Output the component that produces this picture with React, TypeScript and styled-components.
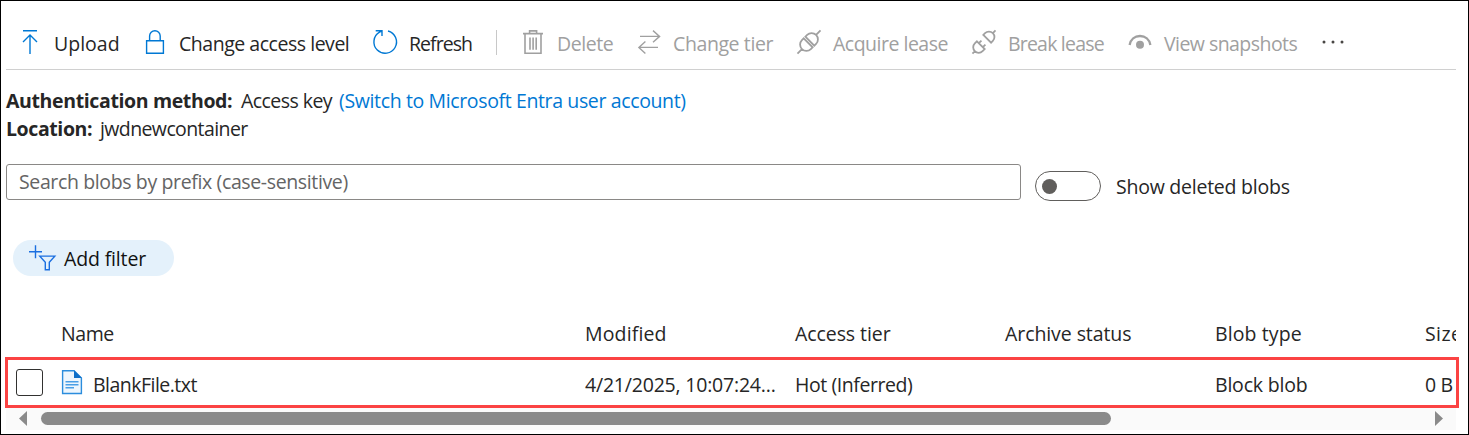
import React from "react";
import styled, { createGlobalStyle } from "styled-components";

const GlobalStyle = createGlobalStyle`
  * { box-sizing: border-box; }
  body { margin: 0; background: #fff; }
`;

const Frame = styled.main`
  width: 1469px;
  height: 435px;
  border: 1px solid #000;
  padding: 0 12px 0 5px;
  background: #fff;
  color: #262626;
  font: 400 19.5px/28px "Open Sans", "Noto Sans", sans-serif;
  font-kerning: none;
  white-space: nowrap;
  display: flex;
  flex-direction: column;
`;

const Text = styled.span<{ $track?: number }>`
  letter-spacing: ${(p) => p.$track ?? -0.35}px;
`;

const Toolbar = styled.nav`
  height: 69px;
  flex: none;
  border-bottom: 1px solid #d0d0d0;
  padding: 29px 0 0 12px;
  display: flex;
  align-items: flex-start;
`;

const Command = styled.button<{ $width: number; $disabled?: boolean }>`
  width: ${(p) => p.$width}px;
  flex: none;
  border: 0;
  padding: 0;
  background: none;
  font: inherit;
  display: flex;
  gap: 12px;
  color: ${(p) => (p.$disabled ? "#a0a0a0" : "#262626")};
`;

const Glyph = styled.svg<{ $color?: string }>`
  width: 24px;
  height: 24px;
  flex: none;
  overflow: visible;
  fill: none;
  stroke: ${(p) => p.$color ?? "#0078d4"};
  stroke-width: 1.4;
`;

const Divider = styled.span`
  width: 1px;
  height: 25px;
  margin: 0 24px 0 0;
  background: #c8c8c8;
`;

const Info = styled.section`
  padding-top: 17px;
  height: 94px;
  flex: none;
`;

const InfoLine = styled.p`
  margin: 0;
  display: flex;
`;

const Key = styled.b<{ $width: number; $track: number }>`
  width: ${(p) => p.$width}px;
  letter-spacing: ${(p) => p.$track}px;
`;

const Link = styled.a`
  margin-left: 2.5px;
  color: #0078d4;
  letter-spacing: -0.37px;
`;

const SearchRow = styled.section`
  height: 76px;
  flex: none;
  display: flex;
  align-items: flex-start;
`;

const SearchBox = styled.div`
  width: 1015px;
  height: 36px;
  border: 1px solid #8a8886;
  border-radius: 3px;
  padding: 3px 0 0 12px;
  color: #646464;
`;

const Switch = styled.span`
  width: 66px;
  height: 30px;
  margin: 7px 15px 0 14px;
  border: 1px solid #605e5c;
  border-radius: 15px;
  padding: 7px 6px;
`;

const Knob = styled.span`
  display: block;
  width: 15px;
  height: 15px;
  border-radius: 50%;
  background: #605e5c;
`;

const SwitchLabel = styled.label`
  padding-top: 9px;
`;

const FilterPill = styled.button`
  width: 161px;
  height: 36px;
  flex: none;
  margin-left: 7px;
  border: 0;
  border-radius: 18px;
  padding: 2px 0 0 16px;
  background: #e4f1fb;
  color: #111;
  font: inherit;
  display: flex;
  align-items: center;
  gap: 7px;
`;

const FilterGlyph = styled(Glyph)`
  width: 28px;
  height: 28px;
`;

const Grid = styled.section`
  padding-top: 44px;
  display: flex;
  flex-direction: column;
`;

const Row = styled.div<{ $head?: boolean }>`
  height: ${(p) => (p.$head ? 37 : 51)}px;
  padding-top: ${(p) => (p.$head ? 0 : 12)}px;
  font-weight: ${(p) => (p.$head ? 500 : 400)};
  position: relative;
`;

const Cells = styled.div<{ $inset?: number }>`
  display: grid;
  grid-template-columns: 55px 524px 210px 210px 210px 210px 31px;
  overflow: hidden;

  > span {
    padding-top: ${(p) => p.$inset ?? 0}px;
  }
`;

const NameCell = styled.div`
  display: flex;
  gap: 8px;
  padding-top: 2px;

  svg {
    margin-top: -1px;
  }
`;

const Checkbox = styled.div`
  width: 27px;
  height: 27px;
  margin-left: 10px;
  border: 1px solid #323130;
  border-radius: 3px;
`;

const Highlight = styled.div`
  position: absolute;
  inset: 0 -3px 0 -1px;
  border: 3px solid #fb4343;
`;

const Scrollbar = styled.div`
  height: 22px;
  background: #fafafa;
  display: flex;
  align-items: center;
  padding: 0 13px 1px;
`;

const Thumb = styled.div`
  width: 1070px;
  height: 13px;
  margin: 0 auto 0 14px;
  border-radius: 7px;
  background: #8a8a8a;
`;

const Arrow = styled.svg`
  width: 8px;
  height: 15px;
  fill: #8a8a8a;
`;

const GREY = "#a0a0a0";

const UploadIcon = () => (
  <Glyph viewBox="0 0 24 24">
    <path d="M5 .8H19M12 5V24M5 12l7-7 7 7" />
  </Glyph>
);
const LockIcon = () => (
  <Glyph viewBox="0 0 24 24">
    <path d="M3.6 10.7H20.4V23.3H3.6ZM6.6 10.7V6a5.3 5.3 0 0 1 10.6 0v4.7" />
  </Glyph>
);
const RefreshIcon = () => (
  <Glyph viewBox="0 0 24 24">
    <path d="M15 1A11.3 11.3 0 1 1 6.5 2.2L9 .8M2.7.8H9V6" />
  </Glyph>
);
const DeleteIcon = () => (
  <Glyph viewBox="0 0 24 24" $color={GREY}>
    <path d="M2 3.6H22M8.6 3.4V.9h7v2.5M4 3.6V23.3H20V3.6M9 7.5v12.3M12.1 7.5v12.3M15.2 7.5v12.3" strokeWidth="1.6" />
  </Glyph>
);
const TierIcon = () => (
  <Glyph viewBox="0 0 24 24" $color={GREY}>
    <path d="M3 6.4H22.6M16 .6l6.6 5.8-6.6 5.8M21 17.4H2M8.4 11.6L1.9 17.4l6.5 6" />
  </Glyph>
);
const AcquireIcon = () => (
  <Glyph viewBox="0 0 24 24" $color={GREY}>
    <g transform="translate(12 12) rotate(-45)">
      <path
        strokeWidth="1.8"
        d="M-16.3 0H-10M-1.2-6.3V6.3H-3.7A6.3 6.3 0 0 1-3.7-6.3ZM1.2-6.3V6.3H3.7A6.3 6.3 0 0 0 3.7-6.3ZM10 0H16.3"
      />
    </g>
  </Glyph>
);
const BreakIcon = () => (
  <Glyph viewBox="0 0 24 24" $color={GREY}>
    <g transform="translate(12 12) rotate(-45)">
      <path
        strokeWidth="1.8"
        d="M-16.3 0H-13M-4.500-5.5V5.5H-7.5A5.5 5.5 0 0 1-7.5-5.5ZM-4.500-2.8H-.8M-4.500 2.8H-.8M4.5-5.5V5.5H7A5.5 5.5 0 0 0 7-5.5ZM12.5 0H16.3"
      />
    </g>
  </Glyph>
);
const EyeIcon = () => (
  <Glyph viewBox="0 0 24 24" $color={GREY}>
    <path d="M1.6 15C2.6 9.2 6.8 6 12 6s9.4 3.2 10.4 9" strokeWidth="2.3" />
    <circle cx="12" cy="14.7" r="4" fill={GREY} stroke="none" />
  </Glyph>
);
const MoreIcon = () => (
  <Glyph viewBox="0 0 24 24">
    <g fill="#484644" stroke="none">
      <circle cx="4" cy="12" r="1.5" />
      <circle cx="13" cy="12" r="1.5" />
      <circle cx="22" cy="12" r="1.5" />
    </g>
  </Glyph>
);
const AddFilterIcon = () => (
  <FilterGlyph viewBox="0 0 28 28" $color="#1a6fe0">
    <path d="M0 6.7H13M6.5 .2V13.2M10.8 11.1H25.8L20.3 17.3V24.7H16.3V17.3Z" />
  </FilterGlyph>
);
const FileIcon = () => (
  <Glyph viewBox="0 0 24 24">
    <path d="M1.6.7H13L20.4 8V23.5H1.6Z" fill="#eef6fd" stroke="#2b8ddd" />
    <path d="M13 .2L20.9 8H13Z" fill="#0f6fc8" stroke="none" />
    <path d="M4.500 11.700H17.500M4.500 14.700H17.500M4.500 17.700H13" stroke="#4a9fe6" />
  </Glyph>
);

type Cmd = { label: string; icon: React.ReactNode; width: number; track: number };
const active: Cmd[] = [
  { label: "Upload", icon: <UploadIcon />, width: 125, track: 0 },
  { label: "Change access level", icon: <LockIcon />, width: 230, track: -0.47 },
  { label: "Refresh", icon: <RefreshIcon />, width: 123, track: -0.96 },
];
const disabled: Cmd[] = [
  { label: "Delete", icon: <DeleteIcon />, width: 116, track: -0.45 },
  { label: "Change tier", icon: <TierIcon />, width: 160, track: -0.4 },
  { label: "Acquire lease", icon: <AcquireIcon />, width: 175, track: -0.5 },
  { label: "Break lease", icon: <BreakIcon />, width: 156, track: -0.8 },
  { label: "View snapshots", icon: <EyeIcon />, width: 192, track: -0.55 },
];
const columns: [string, number][] = [
  ["Name", -0.4],
  ["Modified", 0.15],
  ["Access tier", -0.08],
  ["Archive status", -0.08],
  ["Blob type", 0.1],
  ["Size", 0.41],
];

export default function App() {
  return (
    <>
      <GlobalStyle />
      <Frame>
        <Toolbar>
          {active.map((c) => (
            <Command key={c.label} $width={c.width}>
              {c.icon}
              <Text $track={c.track}>{c.label}</Text>
            </Command>
          ))}
          <Divider />
          {disabled.map((c) => (
            <Command key={c.label} $width={c.width} $disabled>
              {c.icon}
              <Text $track={c.track}>{c.label}</Text>
            </Command>
          ))}
          <MoreIcon />
        </Toolbar>
        <Info>
          <InfoLine>
            <Key $width={235} $track={-0.37}>Authentication method:</Key>
            <Text $track={-0.55}>Access key&nbsp;</Text>
            <Link>(Switch to Microsoft Entra user account)</Link>
          </InfoLine>
          <InfoLine>
            <Key $width={94} $track={-0.4}>Location:</Key>
            <Text $track={-0.6}>jwdnewcontainer</Text>
          </InfoLine>
        </Info>
        <SearchRow>
          <SearchBox>
            <Text $track={-0.37}>Search blobs by prefix (case-sensitive)</Text>
          </SearchBox>
          <Switch>
            <Knob />
          </Switch>
          <SwitchLabel>
            <Text $track={-0.24}>Show deleted blobs</Text>
          </SwitchLabel>
        </SearchRow>
        <FilterPill>
          <AddFilterIcon />
          <Text $track={-0.15}>Add filter</Text>
        </FilterPill>
        <Grid>
          <Row $head>
            <Cells>
              <span />
              {columns.map(([label, track]) => (
                <Text key={label} $track={track}>{label}</Text>
              ))}
            </Cells>
          </Row>
          <Row>
            <Cells $inset={2}>
              <Checkbox />
              <NameCell>
                <FileIcon />
                <Text $track={-0.52}>BlankFile.txt</Text>
              </NameCell>
              <Text $track={-0.2}>4/21/2025, 10:07:24...</Text>
              <Text $track={-0.43}>Hot (Inferred)</Text>
              <span />
              <Text $track={-0.2}>Block blob</Text>
              <Text $track={-0.4}>0 B</Text>
            </Cells>
            <Highlight />
          </Row>
          <Scrollbar>
            <Arrow viewBox="0 0 8 15"><path d="M8 0V15L0 7.5Z" /></Arrow>
            <Thumb />
            <Arrow viewBox="0 0 8 15"><path d="M0 0V15L8 7.5Z" /></Arrow>
          </Scrollbar>
        </Grid>
      </Frame>
    </>
  );
}
